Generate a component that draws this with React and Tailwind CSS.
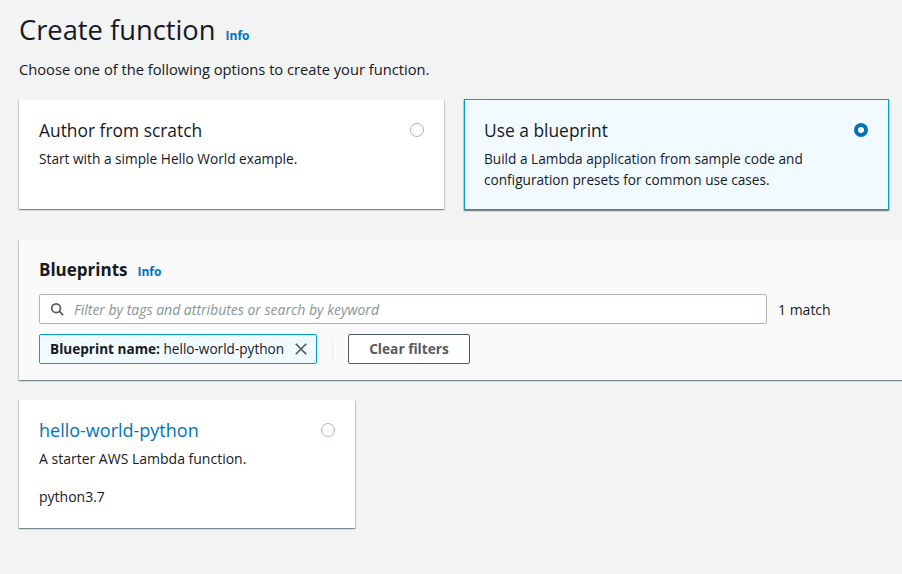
import React from "react";

const font = { fontFamily: '"Open Sans", "Noto Sans", Arial, sans-serif' };

function Radio({ checked }) {
  if (checked) {
    return (
      <span className="flex h-[14px] w-[14px] items-center justify-center rounded-full bg-[#0073bb]">
        <span className="h-[6px] w-[6px] rounded-full bg-white" />
      </span>
    );
  }
  return <span className="block h-[14px] w-[14px] rounded-full border border-[#aab7b8] bg-white" />;
}

const shadow =
  "shadow-[0_1px_1px_0_rgba(0,28,36,0.3),1px_1px_1px_0_rgba(0,28,36,0.15),-1px_1px_1px_0_rgba(0,28,36,0.15)]";

export default function App() {
  return (
    <div className="min-h-[574px] w-[902px] overflow-hidden bg-[#f2f3f3] text-[#16191f]" style={font}>
      <div className="pl-[19px] pt-[11px]">
        <div className="flex items-baseline gap-[10px]">
          <h1 className="text-[27.3px] leading-[38px] font-normal text-[#16191f]">Create function</h1>
          <span className="text-[12px] font-bold text-[#0073bb]">Info</span>
        </div>
        <p className="mt-[9px] text-[14.7px] leading-[22px]">Choose one of the following options to create your function.</p>

        <div className="mt-[20px] flex gap-[20px]">
          <div className={`h-[109px] w-[425px] bg-white px-[20px] pt-[17px] ${shadow}`}>
            <div className="flex items-center justify-between">
              <span className="text-[17.4px] leading-[26px]">Author from scratch</span>
              <Radio />
            </div>
            <p className="mt-[5px] text-[13.7px] leading-[21px]">Start with a simple Hello World example.</p>
          </div>
          <div className={`-mt-[1px] h-[111px] w-[425px] border border-[#00a1c9] bg-[#f1faff] px-[19px] pt-[17px] ${shadow}`}>
            <div className="flex items-center justify-between">
              <span className="text-[17.4px] leading-[26px]">Use a blueprint</span>
              <span className="mr-[1px]"><Radio checked /></span>
            </div>
            <p className="mt-[5px] text-[13.65px] leading-[21px]">
              Build a Lambda application from sample code and
              <br />
              configuration presets for common use cases.
            </p>
          </div>
        </div>

        <div className={`mt-[30px] h-[140px] w-[900px] bg-[#fafafa] px-[20px] pt-[19px] ${shadow}`}>
          <div className="flex items-baseline gap-[10px]">
            <span className="text-[17px] font-bold leading-[22px]">Blueprints</span>
            <span className="text-[12px] font-bold text-[#0073bb]">Info</span>
          </div>
          <div className="mt-[13px] flex items-center gap-[11px]">
            <div className="flex h-[30px] w-[728px] items-center rounded-[2px] border border-[#aab7b8] bg-white pl-[10px]">
              <svg width="14" height="14" viewBox="0 0 16 16" fill="none" stroke="#545b64" strokeWidth="2">
                <circle cx="7" cy="7" r="5" />
                <path d="M10.5 10.5 15 15" />
              </svg>
              <span className="ml-[10px] text-[14px] italic text-[#879596]">Filter by tags and attributes or search by keyword</span>
            </div>
            <span className="text-[14px]">1 match</span>
          </div>
          <div className="mt-[10px] flex items-center">
            <div className="flex h-[30px] w-[278px] items-center rounded-[2px] border border-[#00a1c9] bg-[#f1faff] pl-[10px] pr-[8px]">
              <span className="whitespace-nowrap text-[13.6px]"><b>Blueprint name:</b> hello-world-python</span>
              <svg className="ml-auto" width="14" height="14" viewBox="0 0 16 16" fill="none" stroke="#545b64" strokeWidth="2">
                <path d="M2 2l12 12M14 2 2 14" />
              </svg>
            </div>
            <span className="ml-[15px] h-[22px] w-px bg-[#eaeded]" />
            <button className="ml-[15px] h-[30px] w-[122px] rounded-[2px] border border-[#545b64] bg-white text-[13.7px] font-bold text-[#545b64]">
              Clear filters
            </button>
          </div>
        </div>

        <div className={`mt-[20px] h-[128px] w-[336px] bg-white px-[20px] pt-[17px] ${shadow}`}>
          <div className="flex items-center justify-between">
            <span className="text-[18px] leading-[26px] text-[#0073bb]">hello-world-python</span>
            <Radio />
          </div>
          <p className="mt-[5px] text-[14px] leading-[21px]">A starter AWS Lambda function.</p>
          <p className="mt-[17px] text-[14px] leading-[21px]">python3.7</p>
        </div>
      </div>
    </div>
  );
}
